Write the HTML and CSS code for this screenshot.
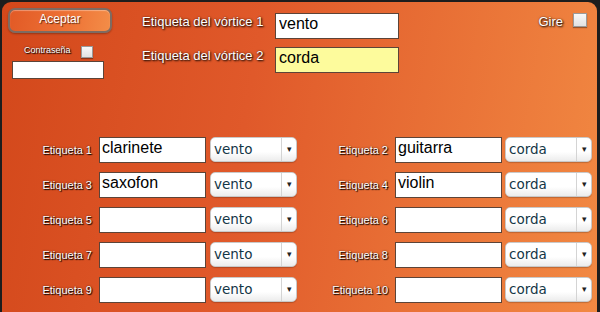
FILE: index.html
```html
<!DOCTYPE html>
<html lang="es">
<head>
    <meta charset="UTF-8">
    <title>Etiquetas</title>
    <link rel="stylesheet" href="styles.css">
</head>
<body>
    <div class="panel">
        <div class="top">
            <div class="login">
                <button class="accept-btn">Aceptar</button>
                <div class="pass-row">
                    <span class="small-label">Contraseña</span>
                    <span class="check"></span>
                </div>
                <input class="pass-input" type="text" value="">
            </div>

            <div class="vortex">
                <span class="label">Etiqueta del vórtice 1</span>
                <input class="field" type="text" value="vento">
                <span class="label">Etiqueta del vórtice 2</span>
                <input class="field active" type="text" value="corda">
            </div>

            <div class="turn">
                <span class="label">Gire</span>
                <span class="check"></span>
            </div>
        </div>

        <div class="tags">
            <span class="tag-label">Etiqueta 1</span>
            <input class="tag-input" type="text" value="clarinete">
            <div class="pick"><span>vento</span><i>▾</i></div>
            <span class="tag-label">Etiqueta 2</span>
            <input class="tag-input" type="text" value="guitarra">
            <div class="pick"><span>corda</span><i>▾</i></div>

            <span class="tag-label">Etiqueta 3</span>
            <input class="tag-input" type="text" value="saxofon">
            <div class="pick"><span>vento</span><i>▾</i></div>
            <span class="tag-label">Etiqueta 4</span>
            <input class="tag-input" type="text" value="violin">
            <div class="pick"><span>corda</span><i>▾</i></div>

            <span class="tag-label">Etiqueta 5</span>
            <input class="tag-input" type="text" value="">
            <div class="pick"><span>vento</span><i>▾</i></div>
            <span class="tag-label">Etiqueta 6</span>
            <input class="tag-input" type="text" value="">
            <div class="pick"><span>corda</span><i>▾</i></div>

            <span class="tag-label">Etiqueta 7</span>
            <input class="tag-input" type="text" value="">
            <div class="pick"><span>vento</span><i>▾</i></div>
            <span class="tag-label">Etiqueta 8</span>
            <input class="tag-input" type="text" value="">
            <div class="pick"><span>corda</span><i>▾</i></div>

            <span class="tag-label">Etiqueta 9</span>
            <input class="tag-input" type="text" value="">
            <div class="pick"><span>vento</span><i>▾</i></div>
            <span class="tag-label">Etiqueta 10</span>
            <input class="tag-input" type="text" value="">
            <div class="pick"><span>corda</span><i>▾</i></div>
        </div>
    </div>
</body>
</html>
```

FILE: styles.css
```css
body {
    margin: 0;
    background: #1d1d1d;
    font-family: "Liberation Sans", Arial, sans-serif;
    overflow: hidden;
    height: 312px;
}
.panel {
    margin: 2px 3px 0 2px;
    height: 360px;
    box-sizing: border-box;
    padding: 6px 5px 0 6px;
    border-radius: 9px 9px 0 0;
    background: linear-gradient(100deg, #d3481b 0%, #e0592a 40%, #f28a43 100%);
}
.top {
    display: flex;
    align-items: flex-start;
    height: 129px;
}
.login {
    width: 104px;
}
.accept-btn {
    display: block;
    width: 104px;
    height: 25px;
    border: 2px solid #7d6b62;
    border-radius: 7px;
    background: linear-gradient(100deg, #e25a26 0%, #ee7336 60%, #f38d48 100%);
    box-shadow: inset 0 1px 1px rgba(255,255,255,0.35), 0 1px 2px rgba(0,0,0,0.3);
    color: #fff;
    font-family: "Liberation Sans", Arial, sans-serif;
    font-size: 12px;
    padding: 0 0 3px;
    text-shadow: 1px 1px 1px rgba(0,0,0,0.6);
}
.pass-row {
    display: flex;
    align-items: flex-start;
    margin-top: 13px;
    padding-left: 16px;
}
.small-label {
    font-size: 9px;
    color: #fff;
    text-shadow: 1px 1px 1px #000, 0 0 2px rgba(0,0,0,0.6);
    width: 57px;
    margin-top: -1px;
}
.check {
    display: inline-block;
    width: 10px;
    height: 10px;
    border: 1px solid #9a9a9a;
    background: linear-gradient(#f8f8f8, #e2e2e2);
    box-shadow: 0 1px 1px rgba(0,0,0,0.35);
}
.pass-input {
    display: block;
    margin: 3px 0 0 4px;
    width: 92px;
    height: 18px;
    box-sizing: border-box;
    border: 1px solid #5c4438;
    background: #fff;
}
.vortex {
    display: grid;
    grid-template-columns: 133px 124px;
    row-gap: 8px;
    margin: 5px 0 0 30px;
}
.label {
    color: #fff;
    font-size: 13px;
    text-shadow: 1px 1px 2px #000, 0 0 2px rgba(0,0,0,0.5);
    padding-top: 1px;
}
.field {
    width: 124px;
    height: 26px;
    box-sizing: border-box;
    border: 1px solid #5c4438;
    background: #fff;
    font-family: "Liberation Sans", Arial, sans-serif;
    font-size: 16px;
    color: #000;
    padding: 0 3px 4px;
    outline: none;
}
.field.active {
    background: #fdfb9c;
}
.turn {
    margin: 4px 5px 0 auto;
    display: flex;
    align-items: flex-start;
    gap: 10px;
}
.turn .label {
    padding-top: 0;
    margin-top: 2px;
}
.turn .check {
    margin-top: 1px;
    width: 12px;
    height: 12px;
}
.tags {
    display: grid;
    grid-template-columns: 91px 111px 87px 98px 110px 87px;
    grid-auto-rows: 26px;
    row-gap: 9px;
    align-items: center;
}
.tag-label {
    text-align: right;
    padding-right: 7px;
    font-size: 11px;
    color: #fff;
    text-shadow: 1px 1px 1px #000, 0 0 2px rgba(0,0,0,0.6);
}
.tag-input {
    width: 107px;
    height: 26px;
    box-sizing: border-box;
    border: 1px solid #5c4438;
    background: #fff;
    font-family: "Liberation Sans", Arial, sans-serif;
    font-size: 16px;
    color: #000;
    padding: 0 2px 4px;
    outline: none;
}
.pick {
    display: flex;
    height: 25px;
    box-sizing: border-box;
    border: 1px solid #c9c9c9;
    border-radius: 5px;
    background: linear-gradient(#ffffff 60%, #ececec);
    box-shadow: 0 1px 1px rgba(0,0,0,0.2);
    align-self: start;
}
.pick span {
    flex: 1;
    font-family: "DejaVu Sans", Verdana, sans-serif;
    font-size: 13.5px;
    color: #143646;
    line-height: 22px;
    padding-left: 3px;
    border-right: 1px solid #d4d4d4;
}
.pick i {
    width: 14px;
    font-style: normal;
    font-size: 9px;
    line-height: 23px;
    text-align: center;
    color: #222;
}
```
